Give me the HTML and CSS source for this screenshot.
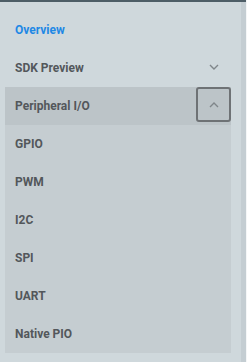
FILE: index.html
```html
<!DOCTYPE html>
<html lang="en">
<head>
    <meta charset="UTF-8">
    <title>Docs Navigation</title>
    <link rel="stylesheet" href="styles.css">
</head>
<body>
    <div class="frame">
        <nav class="sidebar">
            <a class="nav-item active" href="#">Overview</a>
            <div class="nav-item">
                <span>SDK Preview</span>
                <button class="toggle">
                    <svg width="10" height="6" viewBox="0 0 10 6"><polyline points="1,1 5,5 9,1" /></svg>
                </button>
            </div>
            <div class="nav-item open">
                <span>Peripheral I/O</span>
                <button class="toggle focused">
                    <svg width="10" height="6" viewBox="0 0 10 6"><polyline points="1,5 5,1 9,5" /></svg>
                </button>
            </div>
            <div class="submenu">
                <a class="nav-item" href="#">GPIO</a>
                <a class="nav-item" href="#">PWM</a>
                <a class="nav-item" href="#">I2C</a>
                <a class="nav-item" href="#">SPI</a>
                <a class="nav-item" href="#">UART</a>
                <a class="nav-item" href="#">Native PIO</a>
            </div>
        </nav>
        <div class="scroll-track"></div>
    </div>
</body>
</html>
```
FILE: styles.css
```css
body {
    margin: 0;
    background-color: #f4f6f7;
    font-family: 'Roboto', 'Liberation Sans', sans-serif;
}

.frame {
    display: flex;
    height: 362px;
    margin-right: 1px;
    background-color: #cfd8dc;
    border-top: 2px solid #4d5d66;
    box-sizing: border-box;
}

.sidebar {
    flex: 1;
    padding: 9px 10px 4px 5px;
}

.scroll-track {
    width: 5px;
    background-color: #c4cdd2;
}

.nav-item {
    display: flex;
    justify-content: space-between;
    align-items: center;
    height: 38px;
    padding-left: 10px;
    box-sizing: border-box;
    font-size: 12px;
    font-weight: 700;
    color: #53575b;
    text-decoration: none;
}

.nav-item.active {
    color: #1e88e5;
}

.nav-item.open {
    background-color: #bcc4c8;
}

.toggle {
    align-self: flex-start;
    display: flex;
    align-items: center;
    justify-content: center;
    width: 35px;
    height: 35px;
    padding: 0;
    background: none;
    border: 2px solid transparent;
    border-radius: 3px;
    box-sizing: border-box;
}

.toggle.focused {
    border-color: #6e7275;
}

.toggle polyline {
    fill: none;
    stroke: #80868a;
    stroke-width: 1.4;
}

.submenu {
    background-color: #c5cdd1;
}
```
